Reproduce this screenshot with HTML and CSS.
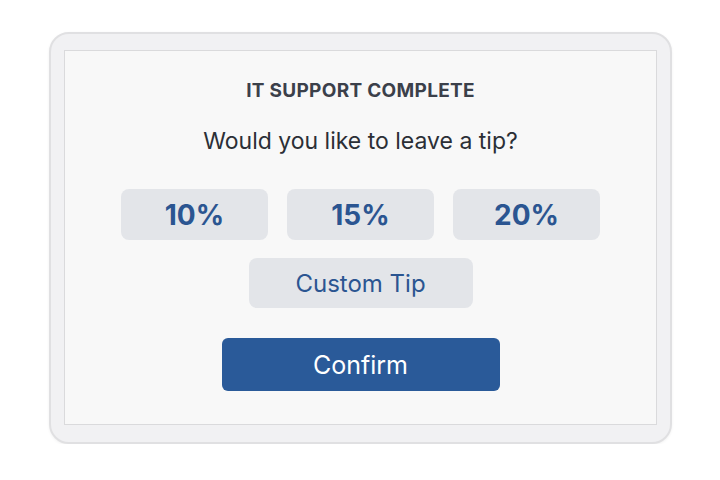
FILE: index.html
```html
<!DOCTYPE html>
<html lang="en">
<head>
    <meta charset="UTF-8">
    <meta name="viewport" content="width=device-width, initial-scale=1.0">
    <title>Tip</title>
    <link rel="stylesheet" href="styles.css">
</head>
<body>
    <div class="device">
        <div class="screen">
            <h1 class="title">IT SUPPORT COMPLETE</h1>
            <p class="question">Would you like to leave a tip?</p>
            <div class="tips">
                <button class="tip">10%</button>
                <button class="tip">15%</button>
                <button class="tip">20%</button>
            </div>
            <button class="custom">Custom Tip</button>
            <button class="confirm">Confirm</button>
        </div>
    </div>
</body>
</html>
```

FILE: styles.css
```css
body {
    margin: 0;
    background: #ffffff;
    font-family: Inter, "Noto Sans", sans-serif;
}

.device {
    box-sizing: border-box;
    width: 623px;
    height: 412px;
    margin: 32px 0 0 49px;
    padding: 16px 13px 17px;
    background: #f1f1f3;
    border: 2px solid #e0e0e2;
    border-radius: 20px;
    box-shadow: 0 1px 3px rgba(0, 0, 0, 0.06);
}

.screen {
    box-sizing: border-box;
    height: 100%;
    background: #f8f8f8;
    border: 1px solid #dadadc;
    display: flex;
    flex-direction: column;
    align-items: center;
}

.title {
    margin: 28px 0 0;
    font-size: 19px;
    font-weight: 700;
    letter-spacing: 0.3px;
    color: #3b404a;
}

.question {
    margin: 25px 0 0;
    font-size: 23px;
    color: #2b2f36;
}

button {
    border: none;
    font-family: inherit;
    cursor: pointer;
}

.tips {
    display: flex;
    gap: 19px;
    margin-top: 34px;
}

.tip {
    width: 147px;
    height: 51px;
    border-radius: 8px;
    background: #e3e5e9;
    color: #2b5591;
    font-size: 28px;
    font-weight: 700;
}

.custom {
    width: 224px;
    height: 50px;
    margin-top: 18px;
    border-radius: 8px;
    background: #e3e5e9;
    color: #2b5591;
    font-size: 24px;
}

.confirm {
    width: 278px;
    height: 53px;
    margin-top: 30px;
    border-radius: 6px;
    background: #2a5a99;
    color: #ffffff;
    font-size: 25px;
}
```
